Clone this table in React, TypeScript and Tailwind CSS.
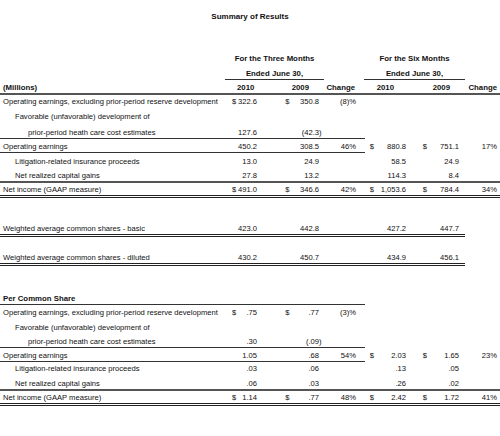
type Cell = string | undefined;

// columns: label | $ | 3M 2010 | $ | 3M 2009 | change | $ | 6M 2010 | $ | 6M 2009 | change
const cols =
  "grid grid-cols-[228px_9px_20px_33px_30px_37px_17px_33px_20px_33px_38px] items-end";

function Num({ v, className }: { v: Cell; className: string }) {
  const hang = v && v.endsWith(")") ? "mr-[-2.5px]" : "";
  return (
    <div className={`${className} whitespace-nowrap pb-[1.5px] text-right leading-[8px]`}>
      <span className={hang}>{v}</span>
    </div>
  );
}

function Row({
  h,
  label,
  indent = 0,
  bold = false,
  vals = [],
}: {
  h: string;
  label: string;
  indent?: 0 | 1 | 2;
  bold?: boolean;
  vals?: Cell[];
}) {
  const pad = indent === 2 ? "pl-[28px]" : indent === 1 ? "pl-[15px]" : "pl-[3px]";
  const [d1, v1, d2, v2, c1, d3, v3, d4, v4, c2] = vals;
  return (
    <div className={`${cols} ${h}`}>
      <div className={`${pad} whitespace-nowrap pb-[1.5px] leading-[8px] ${bold ? "font-bold text-[7.8px]" : ""}`}>
        {label}
      </div>
      <div className="pb-[1.5px] pl-[4px] leading-[8px]">{d1}</div>
      <Num v={v1} className="pr-[0px]" />
      <Num v={d2} className="pr-[0.5px]" />
      <Num v={v2} className="pr-[1px]" />
      <Num v={c1} className="pr-[1px]" />
      <Num v={d3} className="pr-[0px]" />
      <Num v={v3} className="pr-[1px]" />
      <Num v={d4} className="pr-[0px]" />
      <Num v={v4} className="pr-[1px]" />
      <Num v={c2} className="pr-[1px]" />
    </div>
  );
}

function Line({ w, kind = "single" }: { w: string; kind?: "single" | "thick" | "double" }) {
  if (kind === "double") return <div className={`${w} h-[3px] border-y border-[#222]`} />;
  if (kind === "thick") return <div className={`${w} h-[2px] bg-[#555]`} />;
  return <div className={`${w} h-px bg-[#333]`} />;
}

export default function App() {
  return (
    <div className="h-[436px] w-[500px] bg-white font-['Liberation_Sans',Arial,sans-serif] text-[7.6px] text-[#111]">
      <div className="flex h-[22.5px] items-end justify-center pb-[1.5px] text-[8px] font-bold leading-[8px]">
        Summary of Results
      </div>

      {/* period headers */}
      <div className="flex h-[42px] items-end text-[7.8px] font-bold leading-[8px]">
        <div className="w-[225px]" />
        <div className="w-[99px] pb-[1.5px] text-center">For the Three Months</div>
        <div className="w-[40px]" />
        <div className="w-[101px] pb-[1.5px] text-center">For the Six Months</div>
      </div>
      <div className="flex h-[15.5px] text-[7.8px] font-bold leading-[8px]">
        <div className="w-[225px]" />
        <div className="flex w-[99px] items-end justify-center border-b border-[#333] pb-[1.5px]">Ended June 30,</div>
        <div className="w-[40px]" />
        <div className="flex w-[101px] items-end justify-center border-b border-[#333] pb-[1.5px]">Ended June 30,</div>
      </div>
      <div className={`${cols} h-[13px] text-[7.8px] font-bold leading-[8px]`}>
        <div className="pb-[1.5px] pl-[3px]">(Millions)</div>
        <div />
        <div className="whitespace-nowrap pb-[1.5px] pr-[4px] text-right">2010</div>
        <div />
        <div className="whitespace-nowrap pb-[1.5px] pr-[11px] text-right">2009</div>
        <div className="whitespace-nowrap pb-[1.5px] pr-[2px] text-right">Change</div>
        <div />
        <div className="whitespace-nowrap pb-[1.5px] pr-[13px] text-right">2010</div>
        <div />
        <div className="whitespace-nowrap pb-[1.5px] pr-[10px] text-right">2009</div>
        <div className="whitespace-nowrap pb-[1.5px] pr-[1px] text-right">Change</div>
      </div>
      <Line w="w-full" kind="thick" />

      <Row h="h-[12.5px]" label="Operating earnings, excluding prior-period reserve development" vals={["$", "322.6", "$", "350.8", "(8)%"]} />
      <Row h="h-[15px]" indent={1} label="Favorable (unfavorable) development of" />
      <Row h="h-[15.5px]" indent={2} label="prior-period heath care cost estimates" vals={[, "127.6", , "(42.3)"]} />
      <Line w="w-[365px]" />
      <Row h="h-[13px]" label="Operating earnings" vals={[, "450.2", , "308.5", "46%", "$", "880.8", "$", "751.1", "17%"]} />
      <Line w="w-[365px]" />
      <Row h="h-[14.5px]" indent={1} label="Litigation-related insurance proceeds" vals={[, "13.0", , "24.9", , , "58.5", , "24.9"]} />
      <Row h="h-[13.5px]" indent={1} label="Net realized capital gains" vals={[, "27.8", , "13.2", , , "114.3", , "8.4"]} />
      <Line w="w-full" kind="thick" />
      <Row h="h-[12px]" label="Net income (GAAP measure)" vals={["$", "491.0", "$", "346.6", "42%", "$", "1,053.6", "$", "784.4", "34%"]} />
      <Line w="w-full" kind="double" />

      <Row h="h-[36px]" label="Weighted average common shares - basic" vals={[, "423.0", , "442.8", , , "427.2", , "447.7"]} />
      <Line w="w-[465px]" kind="double" />
      <Row h="h-[26px]" label="Weighted average common shares - diluted" vals={[, "430.2", , "450.7", , , "434.9", , "456.1"]} />
      <Line w="w-[465px]" kind="double" />

      <Row h="h-[38px]" bold label="Per Common Share" />
      <Line w="w-[365px]" />
      <Row h="h-[13.5px]" label="Operating earnings, excluding prior-period reserve development" vals={["$", ".75", "$", ".77", "(3)%"]} />
      <Row h="h-[15px]" indent={1} label="Favorable (unfavorable) development of" />
      <Row h="h-[13.5px]" indent={2} label="prior-period heath care cost estimates" vals={[, ".30", , "(.09)"]} />
      <Line w="w-[365px]" />
      <Row h="h-[13px]" label="Operating earnings" vals={[, "1.05", , ".68", "54%", "$", "2.03", "$", "1.65", "23%"]} />
      <Line w="w-[365px]" />
      <Row h="h-[12.5px]" indent={1} label="Litigation-related insurance proceeds" vals={[, ".03", , ".06", , , ".13", , ".05"]} />
      <Row h="h-[14.5px]" indent={1} label="Net realized capital gains" vals={[, ".06", , ".03", , , ".26", , ".02"]} />
      <Line w="w-full" kind="thick" />
      <Row h="h-[12px]" label="Net income (GAAP measure)" vals={["$", "1.14", "$", ".77", "48%", "$", "2.42", "$", "1.72", "41%"]} />
      <Line w="w-full" kind="double" />
    </div>
  );
}
